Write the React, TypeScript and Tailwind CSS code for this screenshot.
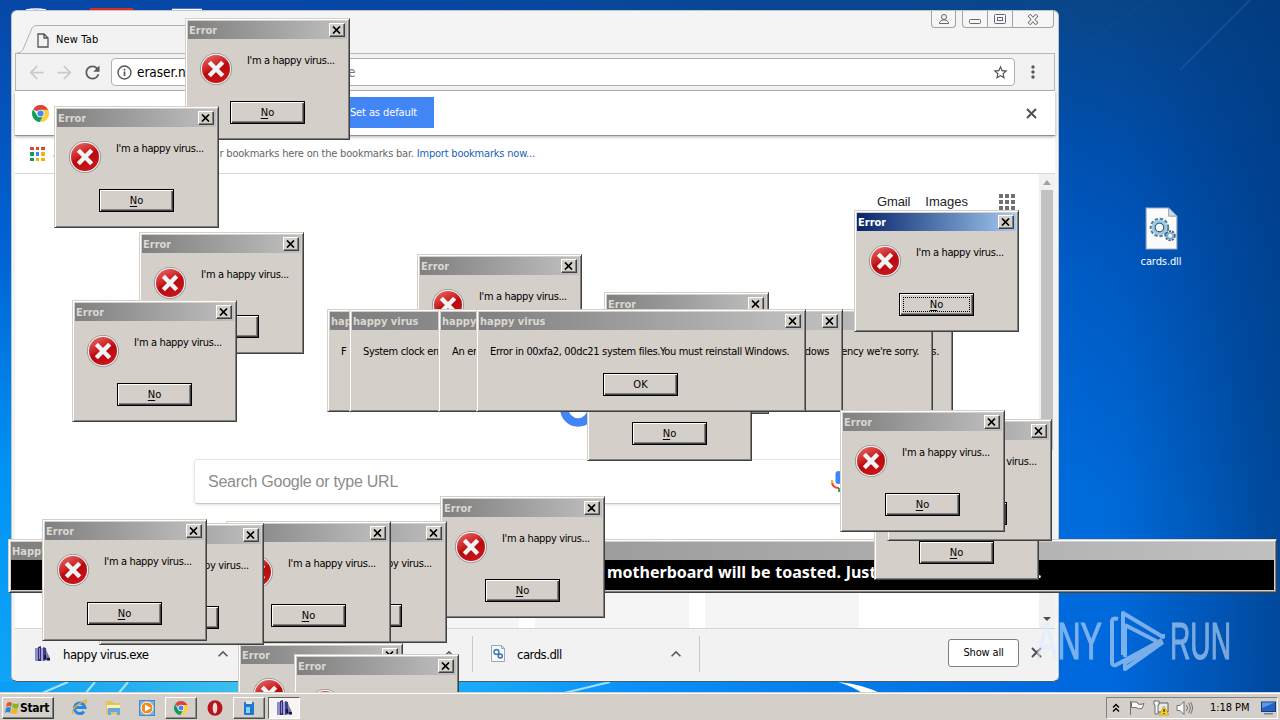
import type { ReactNode } from 'react';
import {
  MdArrowBack,
  MdArrowForward,
  MdKeyboardArrowUp,
  MdMoreVert,
  MdRefresh,
  MdStarBorder,
} from 'react-icons/md';

const UI_FONT = "font-['DejaVu_Sans_Condensed','Noto_Sans',sans-serif]";

interface ErrorDialogProps {
  x: number;
  y: number;
  active?: boolean;
}

interface MessageDialogProps {
  x: number;
  width: number;
  start: string;
  end?: string;
}

// back to front
const backDialogs: ErrorDialogProps[] = [
  { x: 185, y: 18 },
  { x: 54, y: 106 },
  { x: 139, y: 232 },
  { x: 72, y: 300 },
  { x: 417, y: 254 },
  { x: 604, y: 292 },
  { x: 587, y: 339 },
  { x: 238, y: 643 },
  { x: 294, y: 654 },
  { x: 440, y: 496 },
  { x: 282, y: 521 },
  { x: 226, y: 521 },
  { x: 99, y: 523 },
  { x: 42, y: 519 },
  { x: 874, y: 458 },
  { x: 887, y: 419 },
];

const messages: MessageDialogProps[] = [
  { x: 327, width: 626, start: 'F', end: 's.' },
  { x: 349, width: 584, start: 'System clock error', end: "emergency we're sorry." },
  { x: 438, width: 405, start: 'An error', end: 'Windows' },
  { x: 476, width: 330, start: 'Error in 00xfa2, 00dc21 system files.You must reinstall Windows.' },
];

const frontDialogs: ErrorDialogProps[] = [
  { x: 840, y: 410 },
  { x: 854, y: 210, active: true },
];

function Frame({ className, children }: { className?: string; children: ReactNode }) {
  return (
    <div
      className={`flex h-full w-full flex-col border border-t-[#d4cfc8] border-l-[#d4cfc8] border-r-[#404040] border-b-[#404040] bg-[#d4cfc8] p-[2px] shadow-[inset_1px_1px_0_#fff,inset_-1px_-1px_0_#808080] ${className ?? ''}`}
    >
      {children}
    </div>
  );
}

function TitleBar({ title, active, closable = true }: { title: string; active?: boolean; closable?: boolean }) {
  return (
    <div
      className={`flex h-[18px] shrink-0 items-center justify-between bg-gradient-to-r pr-[2px] pl-[1px] ${
        active ? 'from-[#0a246a] to-[#a6caf0] text-white' : 'from-[#808080] to-[#c0c0c0] text-[#dcd7d0]'
      }`}
    >
      <span className="overflow-hidden pt-px text-[11px] leading-[18px] font-bold whitespace-nowrap">{title}</span>
      {closable && (
        <span className="flex h-[14px] w-4 shrink-0 items-center justify-center border border-t-white border-l-white border-r-[#404040] border-b-[#404040] bg-[#d4cfc8] shadow-[inset_-1px_-1px_0_#808080]">
          <svg width="9" height="8" viewBox="0 0 9 8" className="mr-px">
            <path d="M1 .5 8 7.5M8 .5 1 7.5" stroke="#000" strokeWidth="1.7" />
          </svg>
        </span>
      )}
    </div>
  );
}

function PushButton({ children, focused }: { children: ReactNode; focused?: boolean }) {
  return (
    <div className="h-[23px] w-[75px] border border-black bg-[#d4cfc8] p-[3px] shadow-[inset_1px_1px_0_#fff,inset_-1px_-1px_0_#404040,inset_-2px_-2px_0_#808080]">
      <div
        className={`flex h-full items-center justify-center text-[11px] leading-none ${
          focused ? 'border border-dotted border-black' : ''
        }`}
      >
        {children}
      </div>
    </div>
  );
}

function ErrorIcon() {
  return (
    <svg width="34" height="34" viewBox="0 0 34 34" className="shrink-0">
      <defs>
        <linearGradient id="errorFill" x1="0" y1="0" x2="0.5" y2="1">
          <stop offset="0" stopColor="#e8706c" />
          <stop offset="0.5" stopColor="#cc1f22" />
          <stop offset="0.6" stopColor="#b80a0e" />
          <stop offset="1" stopColor="#c8141a" />
        </linearGradient>
      </defs>
      <circle cx="17" cy="17" r="16" fill="#8f8f8f" />
      <circle cx="17" cy="17" r="15.2" fill="#f0eeee" />
      <circle cx="17" cy="17" r="14" fill="url(#errorFill)" />
      <path d="m10.3 10.3 13.400 13.400M23.700 10.300 10.300 23.700" stroke="#f0f4f4" strokeWidth="4.400" />
    </svg>
  );
}

function ErrorDialog({ x, y, active }: ErrorDialogProps) {
  return (
    <div className="absolute h-[122px] w-[165px]" style={{ left: x, top: y }}>
      <Frame>
        <TitleBar title="Error" active={active} />
        <div className="flex h-[62px] gap-[14px] pt-[13px] pl-[11px]">
          <ErrorIcon />
          <p className="pt-[2px] text-[11px] leading-[14px] tracking-[-0.36px] whitespace-nowrap">I'm a happy virus...</p>
        </div>
        <div className="flex pl-[42px]">
          <PushButton focused={active}>
            <span className="underline underline-offset-2">N</span>o
          </PushButton>
        </div>
      </Frame>
    </div>
  );
}

function MessageDialog({ x, width, start, end }: MessageDialogProps) {
  return (
    <div className="absolute top-[309px] h-[103px]" style={{ left: x, width }}>
      <Frame>
        <TitleBar title="happy virus" />
        <div className="flex justify-between px-[11px] pt-[14px] pb-[14px] text-[11px] leading-[15px] tracking-[-0.33px] whitespace-nowrap">
          <span>{start}</span>
          <span>{end}</span>
        </div>
        <div className="flex justify-center pr-px">
          <PushButton>OK</PushButton>
        </div>
      </Frame>
    </div>
  );
}

function CloseCross({ className }: { className?: string }) {
  return (
    <svg width="11" height="11" viewBox="0 0 11 11" className={className}>
      <path d="m1 1 9 9M10 1l-9 9" stroke="#505050" strokeWidth="2" />
    </svg>
  );
}

function ChromeLogo({ size }: { size: number }) {
  return (
    <svg width={size} height={size} viewBox="0 0 18 18" className="shrink-0">
      <path d="M9 9 1.2 4.5A9 9 0 0 1 16.8 4.5L17.2 5.2H9Z" fill="#db4437" />
      <path d="M9 9 5.6 11 1.2 4.5A9 9 0 0 0 8.4 18L12.2 11.2Z" fill="#0f9d58" />
      <path d="M9 5h8.1A9 9 0 0 1 8.4 18l4-7Z" fill="#ffcd40" />
      <circle cx="9" cy="9" r="4.1" fill="#f1f1f1" />
      <circle cx="9" cy="9" r="3.2" fill="#4285f4" />
    </svg>
  );
}

function ArchiveIcon() {
  return (
    <svg width="17" height="16" viewBox="0 0 17 16" className="shrink-0">
      <path d="M1 2h3v13H1z" fill="#8d8bc9" />
      <path d="m4 1 3-1v15H4z" fill="#32316f" />
      <path d="M5 2h1v11H5z" fill="#8d8bc9" />
      <path d="M7 2h2v13H7z" fill="#a4a3dc" />
      <path d="m9 1 3 1 1 12-4 1z" fill="#413f86" />
      <path d="m12 4 4 8v3h-3z" fill="#77759f" />
      <path d="M10 9h2v4h-2zM13 12h3v2h-3z" fill="#17163e" />
    </svg>
  );
}

function DllIcon({ width, height }: { width: number; height: number }) {
  return (
    <svg width={width} height={height} viewBox="0 0 32 42" className="shrink-0">
      <path d="M1 1h22l8 8v32H1z" fill="#fbfbfb" stroke="#a4b0bc" />
      <path d="M23 1v8h8z" fill="#cfdbe6" stroke="#7f96ac" strokeWidth=".8" />
      <circle cx="14" cy="20" r="7.8" fill="none" stroke="#4f7a98" strokeWidth="3.4" strokeDasharray="3 1.6" />
      <circle cx="14" cy="20" r="6.2" fill="none" stroke="#a0cbe4" strokeWidth="3.2" />
      <circle cx="14" cy="20" r="4.2" fill="#f4f8fb" stroke="#406880" strokeWidth="1.3" />
      <circle cx="24.5" cy="28" r="4.2" fill="none" stroke="#3c6484" strokeWidth="2.4" strokeDasharray="2 1" />
      <circle cx="24.5" cy="28" r="2.8" fill="#f4f8fb" stroke="#7fb2d0" strokeWidth="1.8" />
    </svg>
  );
}

function SmallDllIcon() {
  return (
    <svg width="14" height="17" viewBox="0 0 14 17" fill="none" className="shrink-0">
      <path d="M.5.5h10l3 3v13H.5z" fill="#f6f9fb" stroke="#96a8b8" />
      <path d="M10.500.5v3h3" stroke="#96a8b8" />
      <circle cx="5.500" cy="7" r="2.400" stroke="#4a80b4" strokeWidth="1.600" />
      <circle cx="9.300" cy="11" r="2" stroke="#3c6ca4" strokeWidth="1.500" />
    </svg>
  );
}

function Wallpaper() {
  return (
    <svg width="1280" height="720" className="absolute inset-0">
      <defs>
        <linearGradient id="sky" x1="0" y1="0" x2="0" y2="1">
          <stop offset="0" stopColor="#0747a6" />
          <stop offset="0.35" stopColor="#0063d6" />
          <stop offset="0.65" stopColor="#0092f4" />
          <stop offset="1" stopColor="#12a8f8" />
        </linearGradient>
        <linearGradient id="east" x1="0" y1="0" x2="0" y2="1">
          <stop offset="0" stopColor="#0a4688" />
          <stop offset="0.2" stopColor="#0050b0" />
          <stop offset="0.35" stopColor="#005ac4" />
          <stop offset="0.7" stopColor="#006cdc" />
          <stop offset="1" stopColor="#0068de" />
        </linearGradient>
        <linearGradient id="shade" x1="0" y1=".3" x2="1" y2="0">
          <stop offset="0" stopColor="#003a80" stopOpacity="0" />
          <stop offset="0.5" stopColor="#003a80" stopOpacity="0.2" />
          <stop offset="1" stopColor="#003a80" stopOpacity="0.6" />
        </linearGradient>
        <linearGradient id="corner" x1="0" x2="1">
          <stop offset="0.3" stopColor="#003a80" stopOpacity="0" />
          <stop offset="1" stopColor="#003a80" stopOpacity="0.5" />
        </linearGradient>
        <linearGradient id="eastMask" x1="0" x2="1">
          <stop offset="0" stopColor="#000" />
          <stop offset="1" stopColor="#fff" />
        </linearGradient>
        <mask id="fadeEast">
          <rect x="300" width="760" height="720" fill="url(#eastMask)" />
          <rect x="1059" width="221" height="720" fill="#fff" />
        </mask>
        <linearGradient id="floor" x1="0" x2="1">
          <stop offset="0" stopColor="#0c9cf4" />
          <stop offset="0.25" stopColor="#3fc4ee" />
          <stop offset="0.38" stopColor="#20b4f8" />
          <stop offset="0.6" stopColor="#0a90f8" />
          <stop offset="1" stopColor="#0068e0" />
        </linearGradient>
      </defs>
      <rect width="1280" height="720" fill="url(#sky)" />
      <rect width="1280" height="720" fill="url(#east)" mask="url(#fadeEast)" />
      <rect y="682" width="1059" height="12" fill="url(#floor)" />
      <rect x="1059" width="221" height="720" fill="url(#shade)" />
      <rect x="1059" width="221" height="720" fill="url(#corner)" />
      <path d="m1250 0-70 70" stroke="#3a75b8" strokeWidth="1.5" opacity=".35" />
      <path d="m1150 0-60 40" stroke="#3a75b8" opacity=".15" />
      <path d="m40 694 28-12M85 694l10-12M118 694l10-12M560 694l50-12" stroke="#c8f2ff" strokeWidth="2" opacity=".8" />
      <path d="M838 682q24 2 44 12h-18q-12-8-26-12Z" fill="#fff" />
      <path d="M26 10q10-2 20 0M172 9.500h30" stroke="#fff" strokeWidth="1.5" fill="none" />
      <path d="M90 9h43" stroke="#e02a20" strokeWidth="2" />
    </svg>
  );
}

function WindowControls() {
  return (
    <div className="absolute top-0 right-[1px] flex h-[17px] gap-[6px]">
      <div className="flex w-[25px] items-center justify-center rounded-b border border-t-0 border-[#a3a3a3] bg-[#f6f6f6]">
        <svg width="12" height="12" viewBox="0 0 12 12" fill="none" stroke="#6c6472">
          <circle cx="6" cy="4" r="2.5" />
          <path d="M1.5 10.5V9L4 7h4l2.500 2v1.500Z" />
        </svg>
      </div>
      <div className="flex w-[92px] rounded-b border border-t-0 border-[#a3a3a3] bg-[#f6f6f6]">
        <div className="flex w-[25px] items-center justify-center border-r border-[#a3a3a3]">
          <svg width="13" height="12" fill="none" stroke="#6c6472">
            <rect x=".5" y="6.500" width="11" height="4" rx="1" />
          </svg>
        </div>
        <div className="flex w-[25px] items-center justify-center border-r border-[#a3a3a3]">
          <svg width="12" height="11" fill="none" stroke="#6c6472">
            <rect x=".5" y=".5" width="11" height="9" rx="1" />
            <rect x="3.500" y="3.500" width="5" height="3" />
          </svg>
        </div>
        <div className="flex flex-1 items-center justify-center">
          <svg width="12" height="11" viewBox="0 0 12 11">
            <path d="m2 1 8 9M10 1 2 10" stroke="#6c6472" strokeWidth="3.800" />
            <path d="m2.500 1.500 7 8M9.500 1.500l-7 8" stroke="#f6f6f6" strokeWidth="2" />
          </svg>
        </div>
      </div>
    </div>
  );
}

function DownloadItem({ icon, name, className }: { icon: ReactNode; name: string; className: string }) {
  return (
    <div className={`flex h-9 items-center border-r border-[#c8c8c8] pr-[13px] ${className}`}>
      {icon}
      <span className="ml-[12px] flex-1 pt-[2px] text-[13px] tracking-[-0.5px]">{name}</span>
      <MdKeyboardArrowUp size={20} className="text-[#5a5a5a]" />
    </div>
  );
}

function Browser() {
  const appColors = ['#db4437', '#db4437', '#db4437', '#0f9d58', '#4285f4', '#f4b400', '#0f9d58', '#f4b400', '#f4b400'];
  return (
    <div className="absolute top-[10px] left-[11px] isolate flex h-[672px] w-[1048px] flex-col rounded-md border border-[#b9c4cc] border-b-[#40606c] bg-[#f4f4f4] px-[3px] pb-[2px]">
      <div className="relative h-[42px] shrink-0">
        <svg width="1040" height="42" className="absolute inset-0">
          <path d="M0 42q5 1 7-3L17 17q1-3 5-3h170v28Z" fill="#f2f2f2" />
          <path d="M0 42.500q6 0 8-4L17 17q1-2.500 5-2.500h170M192 42.500h848" fill="none" stroke="#b2b2b2" />
        </svg>
        <div className="relative flex h-full items-center pt-[16px] pl-[22px]">
          <svg width="12" height="15" viewBox="0 0 12 15" fill="none" stroke="#555" strokeWidth="1.300">
            <path d="M1 1h6l4 4v9H1ZM7 1v4h4" />
          </svg>
          <span className="ml-[7px] text-[11px] tracking-[0.15px]">New Tab</span>
        </div>
        <WindowControls />
      </div>
      <div className="flex h-[38px] shrink-0 items-center border border-[#b6b6b6] bg-[#f2f2f2] pl-[10px]">
        <MdArrowBack size={21} className="text-[#cacaca]" />
        <MdArrowForward size={21} className="ml-[7px] text-[#cacaca]" />
        <MdRefresh size={21} className="ml-[7px] text-[#5a5a5a]" />
        <div className="ml-[8px] flex h-7 w-[904px] shrink-0 items-center rounded-sm border border-[#b0b0b0] bg-white px-[5px]">
          <svg width="15" height="15" viewBox="0 0 15 15" fill="none" stroke="#555" strokeWidth="1.400">
            <circle cx="7.500" cy="7.500" r="6.500" />
            <path d="M7.500 6.500V11M7.500 3.800v1.600" strokeWidth="1.700" />
          </svg>
          <span className="ml-[5px] w-[211px] text-[13.500px] tracking-[-0.05px]">eraser.net</span>
          <span className="text-[13.500px] text-[#777]">e</span>
          <MdStarBorder size={17} className="ml-auto text-[#505050]" />
        </div>
        <MdMoreVert size={20} className="ml-[8px] text-[#5a5a5a]" />
      </div>
      <div className="relative z-10 flex h-[45px] shrink-0 items-center border-b border-[#909090] bg-white pr-[18px] pl-[17px] shadow-[0_1px_3px_rgba(0,0,0,0.3)]">
        <ChromeLogo size={17} />
        <span className="mb-px ml-[285px] flex h-[31px] w-[100px] items-center justify-center bg-[#4285f4] pt-px pr-px text-[11px] tracking-[-0.1px] text-white">
          Set as default
        </span>
        <CloseCross className="ml-auto" />
      </div>
      <div className="flex h-[38px] shrink-0 items-center border-b border-[#d6d6d6] bg-white pb-px pl-[15px]">
        <div className="grid grid-cols-3 gap-[2px]">
          {appColors.map((color, i) => (
            <span key={i} className="size-[3.5px]" style={{ backgroundColor: color }} />
          ))}
        </div>
        <span className="ml-[9px] w-[166px] text-[11px]">Apps</span>
        <span className="text-[11px] tracking-[-0.2px] whitespace-nowrap text-[#666]">
          r bookmarks here on the bookmarks bar. <span className="text-[#1b5fb8]">Import bookmarks now...</span>
        </span>
      </div>
      <div className="flex min-h-0 flex-1 bg-white">
        <div className="flex flex-1 flex-col overflow-hidden">
          <div className="flex h-[60px] shrink-0 items-center justify-end gap-[15px] pr-[24px] pb-[4px] font-['Liberation_Sans',sans-serif] text-[13px] text-[#222]">
            <span className="tracking-[-0.1px]">Gmail</span>
            <span>Images</span>
            <div className="ml-[16px] grid grid-cols-3 gap-[2px]">
              {appColors.map((_, i) => (
                <span key={i} className="size-1 bg-[#707070]" />
              ))}
            </div>
          </div>
          <div className="h-[225px] shrink-0 pt-[157px] pl-[545px]">
            <svg width="36" height="36" viewBox="0 0 36 36" fill="none">
              <circle cx="18" cy="18" r="13.500" stroke="#4285f4" strokeWidth="8.500" />
            </svg>
          </div>
          <div className="ml-[179px] flex h-[45px] w-[665px] shrink-0 items-center rounded-sm border border-[#e8e8e8] border-b-[#c8c8c8] px-[13px] font-['Liberation_Sans',sans-serif] text-base tracking-[-0.26px] text-[#8c8c8c] shadow-sm">
            Search Google or type URL
            <svg width="14" height="24" viewBox="0 0 14 24" className="ml-auto" fill="none">
              <rect x="4.500" y="1" width="6" height="13" rx="3" fill="#4285f4" />
              <path d="M1 11q0 7 7 7" stroke="#ea4335" strokeWidth="2" />
              <path d="M1 10v3" stroke="#fbbc05" strokeWidth="2" />
              <path d="M8 18v4" stroke="#34a853" strokeWidth="2" />
            </svg>
          </div>
          <div className="mt-[60px] ml-[180px] flex h-[100px] shrink-0 gap-[16px]">
            {[0, 1, 2, 3].map((tile) => (
              <div key={tile} className="w-[154px] bg-[#f5f5f5]" />
            ))}
          </div>
        </div>
        <div className="flex w-[16px] flex-col items-center bg-[#f1f1f1]">
          <svg width="16" height="16">
            <path d="m4 11 4-5 4 5Z" fill="#a2a2a2" />
          </svg>
          <div className="h-[260px] w-3 bg-[#c1c1c1]" />
          <svg width="16" height="14" className="mt-auto">
            <path d="m4 3 4 4 4-4Z" fill="#505050" />
          </svg>
        </div>
      </div>
      <div className="flex h-[51px] shrink-0 items-center border-t border-[#d4d4d4] bg-[#f2f2f2] pr-[13px] pb-px pl-[19px]">
        <DownloadItem icon={<ArchiveIcon />} name="happy virus.exe" className="w-[212px] border-r-0" />
        <DownloadItem icon={<span />} name="" className="w-[227px]" />
        <DownloadItem icon={<SmallDllIcon />} name="cards.dll" className="w-[227px] pl-[18px]" />
        <span className="mb-px ml-auto flex h-7 w-[71px] items-center justify-center rounded-[3px] border border-[#808080] bg-white text-[11px] tracking-[-0.15px]">
          Show all
        </span>
        <CloseCross className="mb-[3px] ml-[12px]" />
      </div>
    </div>
  );
}

function Banner() {
  return (
    <div className="absolute top-[539px] left-[8px] h-[54px] w-[1269px]">
      <Frame>
        <TitleBar title="Happy virus" closable={false} />
        <div className="flex h-[30px] bg-black pl-[596px] font-['Noto_Sans','Open_Sans',sans-serif] text-[16px] leading-[24px] font-bold whitespace-pre text-white">
          <span className="w-[299px] [word-spacing:0.6px]">motherboard will be toasted. Just</span>
          <span className="w-[131px]">,</span>
          <span>.</span>
        </div>
      </Frame>
    </div>
  );
}

function Watermark() {
  return (
    <svg width="200" height="70" viewBox="0 0 200 70" className="absolute top-[605px] left-[1034px] opacity-55">
      <g
        fill="#dcecff"
        stroke="#dcecff"
        strokeWidth="1.200"
        fontFamily="Liberation Sans Narrow, Liberation Sans, sans-serif"
        fontSize="52"
      >
        <text x="2" y="54" textLength="66" lengthAdjust="spacingAndGlyphs">
          ANY
        </text>
        <text x="136" y="54" textLength="61" lengthAdjust="spacingAndGlyphs">
          RUN
        </text>
      </g>
      <g fill="none" stroke="#dcecff" strokeWidth="4" strokeLinejoin="round">
        <path d="M84 14q-6-2-6 3v40q0 4 4 3l46-25" />
        <path d="M91 20v32M91 20l35 18" />
        <path d="M89 50V8l40 24v-3" />
        <path d="m129 37-38 27v-6l37-23" />
      </g>
    </svg>
  );
}

function TaskButton({ children, pressed }: { children: ReactNode; pressed?: boolean }) {
  return (
    <span
      className={`flex h-[22px] w-8 items-center justify-center border ${
        pressed
          ? 'border-t-[#606060] border-l-[#606060] border-r-white border-b-white bg-[#f7f5f3]'
          : 'border-t-white border-l-white border-r-[#505050] border-b-[#505050] shadow-[inset_-1px_-1px_0_#909090]'
      }`}
    >
      {children}
    </span>
  );
}

function Taskbar() {
  return (
    <div className="absolute bottom-0 left-0 flex h-7 w-full items-center border-t border-[#d4cfc8] bg-[#d4cfc8] pt-[2px] pr-[2px] pl-[2px] shadow-[inset_0_1px_0_#fff]">
      <div className="flex h-[22px] w-[52px] items-center border border-t-white border-l-white border-r-[#404040] border-b-[#404040] pl-[2px] shadow-[inset_-1px_-1px_0_#808080]">
        <svg width="15" height="15" viewBox="0 0 15 15">
          <path d="M2 3q3-2 5 0L6 7Q4 5 1 7Z" fill="#e8541e" />
          <path d="M8 3q3 2 6 0l-1 5q-3 2-6-1Z" fill="#7cb82c" />
          <path d="M1 8q3-2 5 0l-1 5q-2-2-5 0Z" fill="#2b86d8" />
          <path d="M7 8q3 2 6 1l-1 4q-3 2-6 0Z" fill="#f6b41c" />
        </svg>
        <span className="text-[12px] font-bold tracking-[-0.3px]">Start</span>
      </div>
      <div className="ml-[17px] flex items-center gap-[17px]">
        <svg width="17" height="17" viewBox="0 0 17 17" fill="none">
          <path d="M13 12.500A5.300 5.300 0 1 1 14 8.500H4" stroke="#2a8ae0" strokeWidth="3" />
          <path d="M2 15Q-1 11 8 5t7-3q1 1-1 3" stroke="#e8b430" strokeWidth="1.300" />
        </svg>
        <svg width="17" height="17" viewBox="0 0 17 17">
          <path d="M1 2h6l2 2h6v11H1Z" fill="#e6c25c" />
          <path d="M2 6h13v4H2Z" fill="#fbf0b8" />
          <path d="M3 9h12v7h-3v-3H6v3H3Z" fill="#64aadc" />
        </svg>
        <svg width="16" height="16" viewBox="0 0 16 16">
          <rect x=".5" y=".5" width="15" height="15" fill="#78b2e4" stroke="#4a86c0" />
          <circle cx="8" cy="8" r="6" fill="#f38b1c" stroke="#fff" />
          <path d="m6 4.500 6 3.500-6 3.500Z" fill="#fff" />
        </svg>
      </div>
      <div className="ml-[10px] flex items-center">
        <TaskButton>
          <ChromeLogo size={14} />
        </TaskButton>
        <svg width="16" height="16" viewBox="0 0 16 16" className="mx-[10px]">
          <ellipse cx="8" cy="8" rx="7.500" ry="7.800" fill="#b9141a" />
          <ellipse cx="8" cy="8" rx="2.300" ry="5.500" fill="#e8dcd8" />
        </svg>
        <TaskButton>
          <svg width="12" height="16" viewBox="0 0 12 16">
            <rect x="1" y="2" width="10" height="13" rx="1" fill="#1c78d0" />
            <path d="M3 1h6v3H3z" fill="#dce8f0" />
            <path d="M3 7h4v6H3z" fill="#8cd0f8" />
          </svg>
        </TaskButton>
        <span className="w-[3px]" />
        <TaskButton pressed>
          <ArchiveIcon />
        </TaskButton>
      </div>
      <div className="ml-auto flex h-[22px] w-[172px] items-center border border-t-[#808080] border-l-[#808080] border-r-white border-b-white pl-[5px]">
        <svg width="8" height="10" viewBox="0 0 8 10" fill="none" stroke="#000" strokeWidth="1.400">
          <path d="m1 4.500 3-3 3 3M1 8.500l3-3 3 3" />
        </svg>
        <svg width="16" height="16" viewBox="0 0 16 16" className="ml-[9px]" fill="#fafafa" stroke="#707070">
          <path d="M1.500 1v14M2.500 2H8l1 2q3 1 6-.5l-2 5q-3 1-5-.5l-1-.5H2.500Z" />
        </svg>
        <svg width="16" height="16" viewBox="0 0 16 16" className="ml-[8px]">
          <path d="M4 3h11v9H4z" fill="#e8e8e8" stroke="#606060" />
          <path d="M1 1h5v4H5v9H2V5H1Z" fill="#f8f8f8" stroke="#505050" strokeWidth=".8" />
          <path d="m11 6 5 9H6Z" fill="#f7d21c" stroke="#b89410" strokeWidth=".6" />
          <path d="M11 9v3M11 13v1" stroke="#000" />
        </svg>
        <svg width="17" height="16" viewBox="0 0 17 16" className="ml-[7px]" fill="none" stroke="#707070">
          <path d="M1 5.500h3l4-4v13l-4-4H1Z" fill="#fafafa" />
          <path d="M10.500 5q2 3 0 6M12.500 3q3.500 5 0 10M14.500 2q4 6 0 12" />
        </svg>
        <span className="ml-[17px] pt-px text-[11px] tracking-[-0.05px] whitespace-nowrap">1:18 PM</span>
        <svg width="15" height="14" viewBox="0 0 15 14" className="mr-px ml-auto">
          <rect x=".5" y="1" width="14" height="9.500" fill="#2463c0" stroke="#163a80" />
          <path d="M1 1.500h13L1 7Z" fill="#5b9ae8" />
          <path d="M3 12h9v1.500H3z" fill="#7080a0" />
        </svg>
      </div>
    </div>
  );
}

export default function App() {
  return (
    <div className={`relative h-[720px] w-[1280px] overflow-hidden text-black ${UI_FONT}`}>
      <Wallpaper />
      <div className="absolute top-[207px] left-[1130px] flex w-[62px] flex-col items-center gap-[5px] text-[11px] tracking-[-0.1px] text-white">
        <DllIcon width={33} height={43} />
        <span className="leading-[14px]">cards.dll</span>
      </div>
      <Browser />
      <Banner />
      {backDialogs.map((dialog, i) => (
        <ErrorDialog key={i} {...dialog} />
      ))}
      {messages.map((message) => (
        <MessageDialog key={message.x} {...message} />
      ))}
      {frontDialogs.map((dialog, i) => (
        <ErrorDialog key={i} {...dialog} />
      ))}
      <Watermark />
      <Taskbar />
    </div>
  );
}
